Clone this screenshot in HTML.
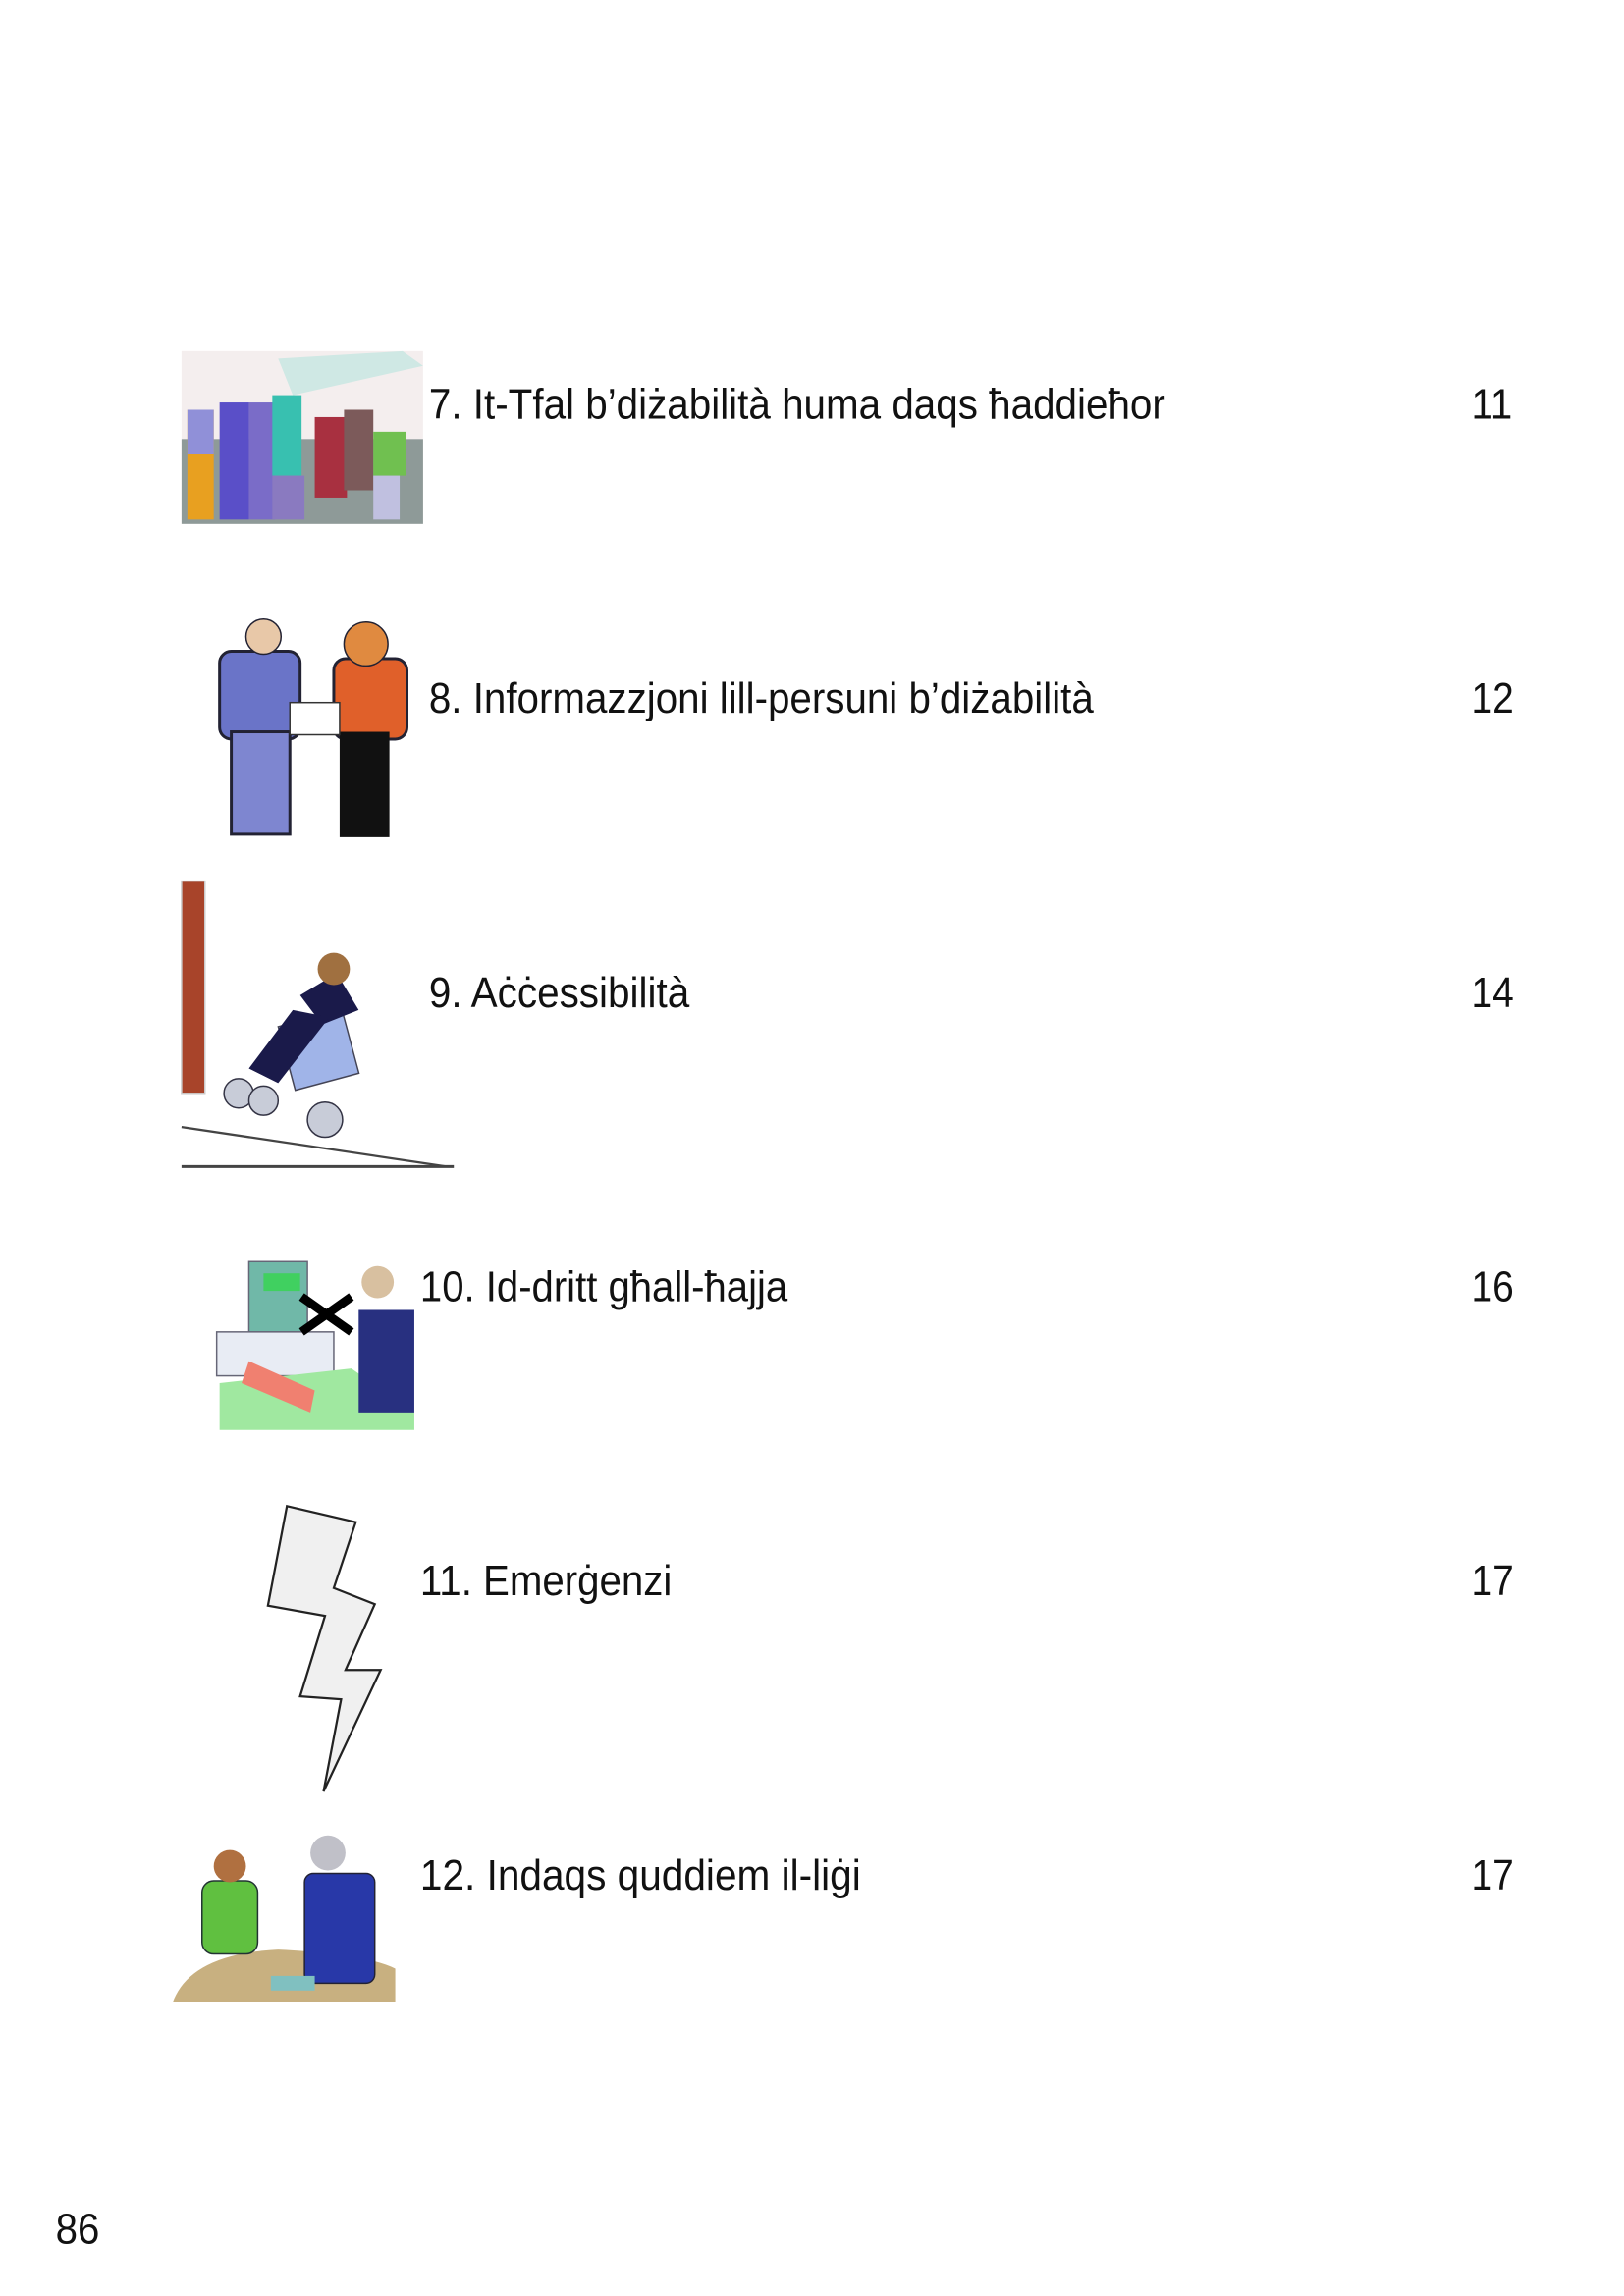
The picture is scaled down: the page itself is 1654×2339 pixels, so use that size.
<!DOCTYPE html>
<html><head><meta charset="utf-8"><style>
html,body{margin:0;padding:0;background:#fff;width:1654px;height:2339px;overflow:hidden}
svg{position:absolute;left:0;top:0}
text{font-family:"Liberation Sans",sans-serif;font-size:29px;fill:#111}
</style></head><body>
<svg width="1654" height="2339" viewBox="0 0 1109.3 1568.7">
<!-- row 1 image -->
<rect x="124" y="240" width="165" height="118" fill="#f4eeee"/>
<rect x="124" y="300" width="165" height="58" fill="#8e9a98"/>
<polygon points="190,245 275,240 289,250 200,270" fill="#cfe8e4"/>
<rect x="128" y="280" width="18" height="75" fill="#e8a020"/>
<rect x="128" y="280" width="18" height="30" fill="#9090d8"/>
<rect x="150" y="275" width="20" height="80" fill="#5a4fc8"/>
<rect x="170" y="275" width="18" height="80" fill="#7a6cc8"/>
<rect x="186" y="270" width="20" height="55" fill="#38c0b0"/>
<rect x="186" y="325" width="22" height="30" fill="#8a7ac0"/>
<rect x="215" y="285" width="22" height="55" fill="#a83040"/>
<rect x="235" y="280" width="20" height="55" fill="#7c5a5a"/>
<rect x="255" y="295" width="22" height="30" fill="#70c050"/>
<rect x="255" y="325" width="18" height="30" fill="#c0c0e0"/>
<!-- row 2 image -->
<rect x="150" y="445" width="55" height="60" rx="8" fill="#6a74c8" stroke="#223" stroke-width="2"/>
<rect x="158" y="500" width="40" height="70" fill="#7e86d0" stroke="#223" stroke-width="2"/>
<circle cx="180" cy="435" r="12" fill="#e8c8a8" stroke="#223"/>
<rect x="228" y="450" width="50" height="55" rx="8" fill="#e0602a" stroke="#223" stroke-width="2"/>
<rect x="232" y="500" width="34" height="72" fill="#111"/>
<circle cx="250" cy="440" r="15" fill="#e08a40" stroke="#223"/>
<rect x="198" y="480" width="34" height="22" fill="#fff" stroke="#333"/>
<!-- row 3 image -->
<rect x="124" y="602" width="16" height="145" fill="#a8442a" stroke="#ccc"/>
<line x1="124" y1="770" x2="305" y2="797" stroke="#444" stroke-width="1.5"/>
<line x1="124" y1="797" x2="310" y2="797" stroke="#444" stroke-width="2"/>
<rect x="195" y="695" width="45" height="45" fill="#a0b4e8" stroke="#445" transform="rotate(-15 217 717)"/>
<path d="M205,680 L230,665 L245,690 L220,700 Z" fill="#1a1a4a"/>
<path d="M170,730 L200,690 L225,695 L190,740 Z" fill="#1a1a4a"/>
<circle cx="228" cy="662" r="11" fill="#a07040"/>
<circle cx="222" cy="765" r="12" fill="#c8ccd8" stroke="#334"/>
<circle cx="163" cy="747" r="10" fill="#c8ccd8" stroke="#334"/>
<circle cx="180" cy="752" r="10" fill="#c8ccd8" stroke="#334"/>
<!-- row 4 image -->
<rect x="170" y="862" width="40" height="48" fill="#70b8a8" stroke="#667"/>
<rect x="180" y="870" width="25" height="12" fill="#40d060"/>
<rect x="148" y="910" width="80" height="30" fill="#e8ecf4" stroke="#667"/>
<path d="M150,945 L240,935 L283,965 L283,977 L150,977 Z" fill="#a0e8a0"/>
<path d="M170,930 L215,950 L212,965 L165,945 Z" fill="#f08070"/>
<rect x="245" y="895" width="38" height="70" fill="#283080"/>
<circle cx="258" cy="876" r="11" fill="#d8c0a0"/>
<path d="M206,886 L240,910 M240,886 L206,910" stroke="#000" stroke-width="6"/>
<!-- bolt -->
<polygon points="196,1029 243,1040 228,1085 256,1096 236,1141 260,1141 221,1224 233,1161 205,1159 222,1104 183,1097" fill="#f0f0f0" stroke="#222" stroke-width="1.5"/>
<!-- row 6 image -->
<path d="M118,1368 Q130,1335 190,1332 Q250,1335 270,1345 L270,1368 Z" fill="#c8b080"/>
<rect x="138" y="1285" width="38" height="50" rx="8" fill="#60c040" stroke="#233"/>
<circle cx="157" cy="1275" r="11" fill="#b07040"/>
<rect x="208" y="1280" width="48" height="75" rx="6" fill="#2838a8" stroke="#223"/>
<circle cx="224" cy="1266" r="12" fill="#c0c0c8"/>
<rect x="185" y="1350" width="30" height="10" fill="#80c0c0"/>
<!-- text -->
<text x="293" y="286" textLength="503" lengthAdjust="spacingAndGlyphs">7. It-Tfal b’diżabilità huma daqs ħaddieħor</text>
<text x="1005" y="286" textLength="28" lengthAdjust="spacingAndGlyphs">11</text>
<text x="293" y="487" textLength="454" lengthAdjust="spacingAndGlyphs">8. Informazzjoni lill-persuni b’diżabilità</text>
<text x="1005" y="487" textLength="29" lengthAdjust="spacingAndGlyphs">12</text>
<text x="293" y="688" textLength="178" lengthAdjust="spacingAndGlyphs">9. Aċċessibilità</text>
<text x="1005" y="688" textLength="29" lengthAdjust="spacingAndGlyphs">14</text>
<text x="287" y="889" textLength="251" lengthAdjust="spacingAndGlyphs">10. Id-dritt għall-ħajja</text>
<text x="1005" y="889" textLength="29" lengthAdjust="spacingAndGlyphs">16</text>
<text x="287" y="1090" textLength="172" lengthAdjust="spacingAndGlyphs">11. Emerġenzi</text>
<text x="1005" y="1090" textLength="29" lengthAdjust="spacingAndGlyphs">17</text>
<text x="287" y="1291" textLength="301" lengthAdjust="spacingAndGlyphs">12. Indaqs quddiem il-liġi</text>
<text x="1005" y="1291" textLength="29" lengthAdjust="spacingAndGlyphs">17</text>
<text x="38" y="1533" textLength="30" lengthAdjust="spacingAndGlyphs">86</text>
</svg>
</body></html>
